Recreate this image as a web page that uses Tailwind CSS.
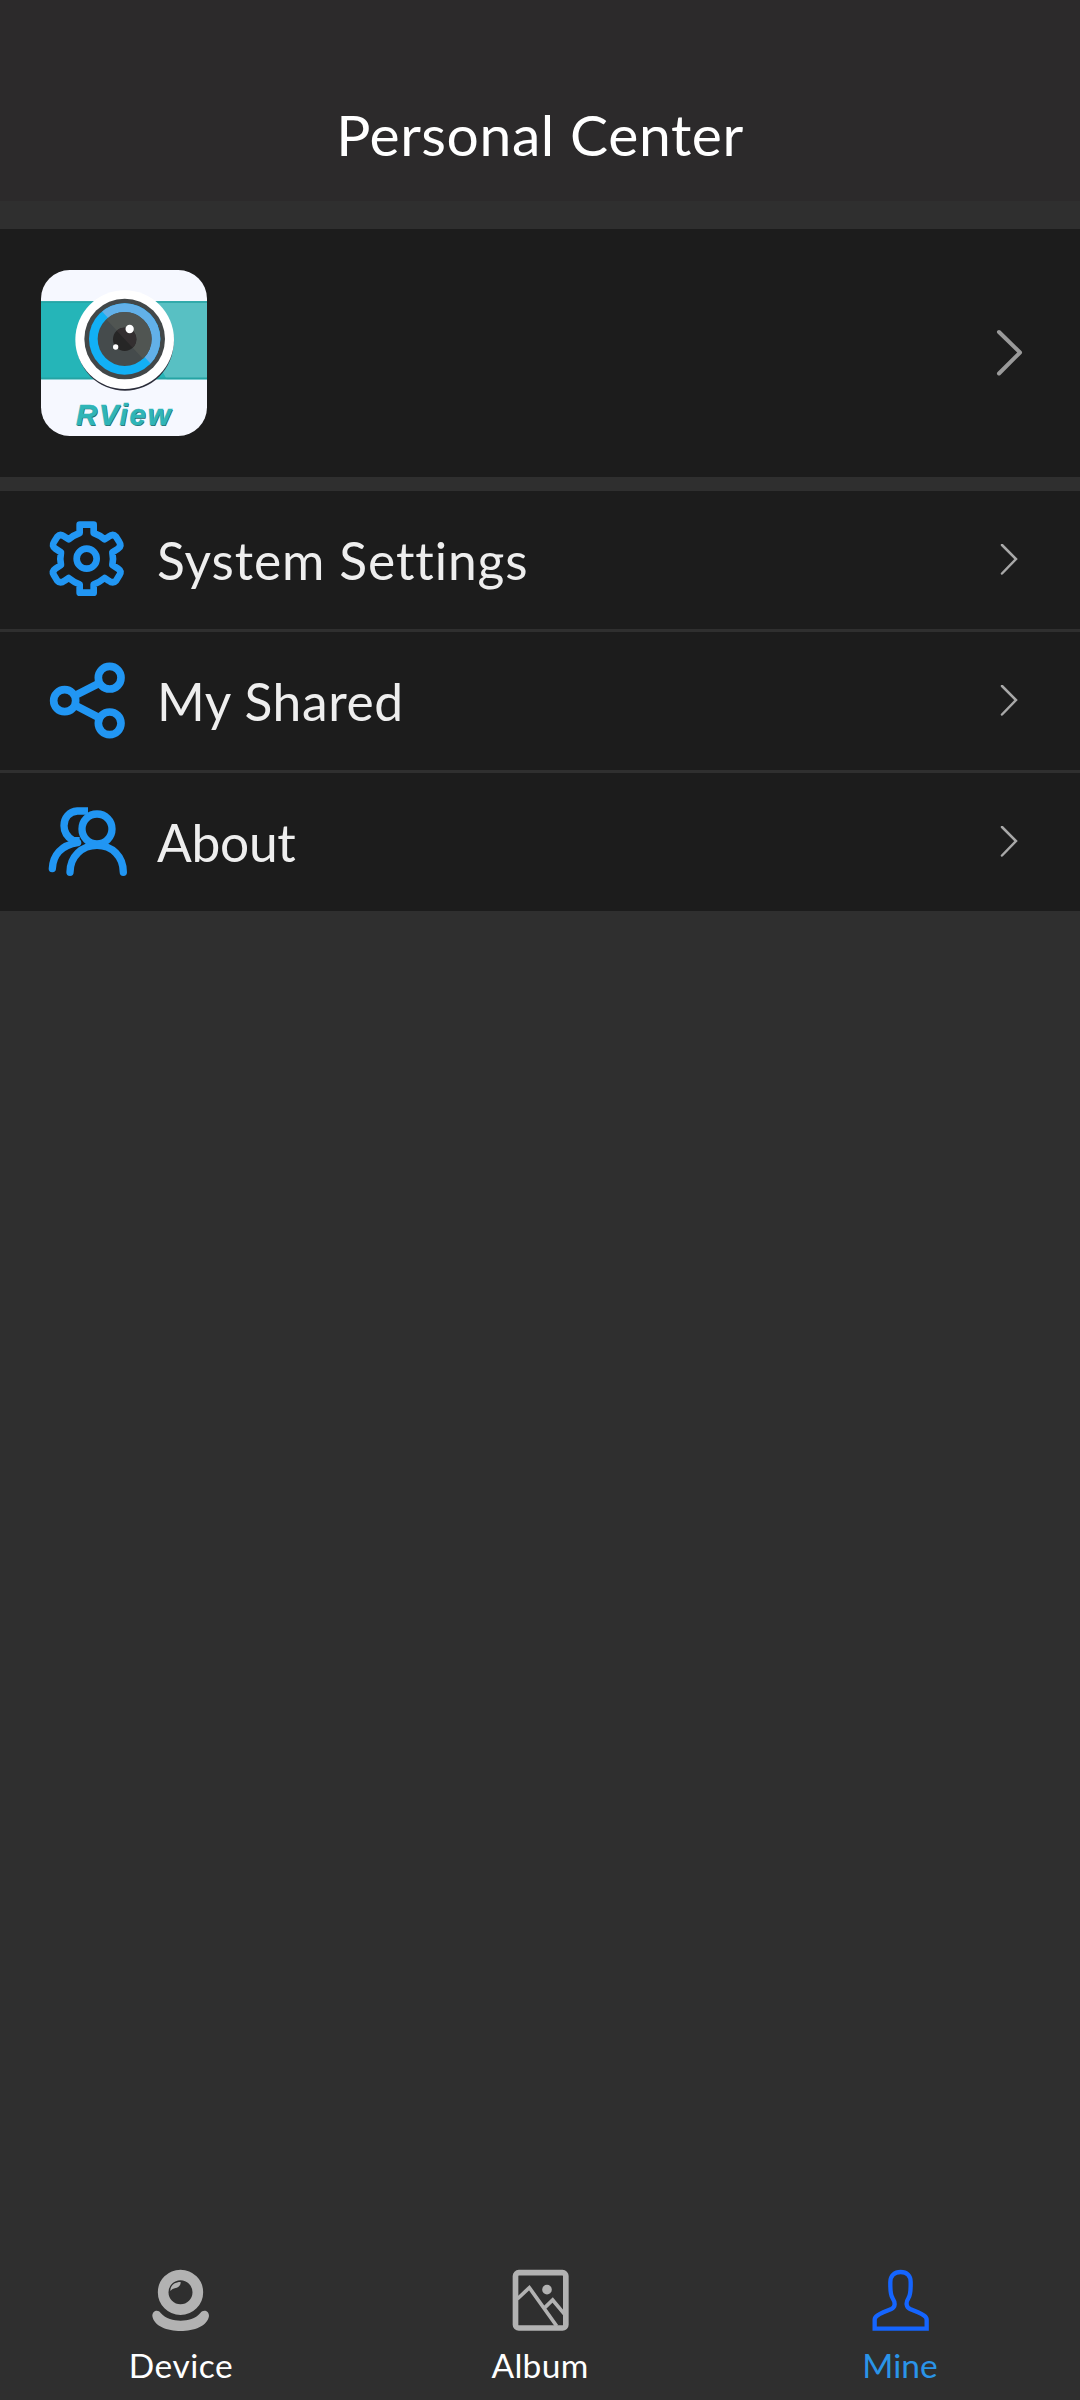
<!DOCTYPE html>
<html lang="en">
<head>
<meta charset="utf-8">
<title>Personal Center</title>
<script src="https://cdn.jsdelivr.net/npm/@tailwindcss/browser@4"></script>
</head>
<body class="bg-[#2f2f2f]">
<div class="flex h-[2400px] w-[1080px] flex-col overflow-hidden bg-[#2f2f2f] font-['Lato',sans-serif]">
  <header class="flex h-[201px] shrink-0 items-center justify-center bg-[#2c2a2b] pt-[67px]">
    <h1 class="text-[57px] leading-[68px] tracking-[0.6px] text-white">Personal Center</h1>
  </header>

  <main class="flex grow flex-col pt-7">
    <section class="flex h-[248px] items-center justify-between bg-[#1c1c1c] pl-[41px] pr-[57px]">
      <svg class="size-[166px]" viewBox="63 59 498 498">
        <defs><clipPath id="tile"><rect x="63" y="59" width="498" height="498" rx="86"/></clipPath>
        <clipPath id="iris"><circle cx="314" cy="266" r="107"/></clipPath>
        <clipPath id="lens"><circle cx="314" cy="266" r="81"/></clipPath></defs>
        <g clip-path="url(#tile)">
          <rect x="63" y="59" width="498" height="498" fill="#f6f8ff"/>
          <rect x="63" y="153" width="498" height="234" fill="#25b5b8"/>
          <path d="M314 153H561V387H440Z" fill="#58c0c3"/>
          <path d="M63 155H561M63 384H561" stroke="#25a3a3" stroke-width="5"/>
          <circle cx="315" cy="275" r="146" fill="#2b2d3a"/>
          <circle cx="314" cy="268" r="148" fill="#fff"/>
          <circle cx="314" cy="266" r="121" fill="#424748"/>
          <g clip-path="url(#iris)">
            <rect x="200" y="150" width="230" height="230" fill="#12b0f5"/>
            <path d="M200 134L446 398V134Z" fill="#62b0e8"/>
          </g>
          <g clip-path="url(#lens)">
            <rect x="230" y="180" width="170" height="170" fill="#454b4c"/>
            <path d="M220 165L414 374V165Z" fill="#505552"/>
          </g>
          <circle cx="314" cy="267" r="35" fill="#262626"/>
          <path d="M290 241A35 35 0 0 1 338 292Z" fill="#332f30"/>
          <circle cx="329" cy="236" r="12.500" fill="#fff"/>
          <circle cx="287" cy="290" r="8" fill="#fff"/>
          <g font-family="Liberation Sans" font-weight="700" font-style="italic" font-size="88">
            <text x="170" y="527" textLength="284" fill="#28666c" aria-hidden="true">RView</text>
            <text x="168" y="525" textLength="284" fill="#2fb5b7" stroke="#2fb5b7" stroke-width="2">RView</text>
          </g>
        </g>
      </svg>
      <svg class="h-12 w-[27px]" viewBox="0 0 27 48" fill="none" stroke="#9a9a9a" stroke-width="4" stroke-linecap="round" stroke-linejoin="round"><path d="M3 3L24 23.500L3 44.500"/></svg>
    </section>

    <ul class="mt-3.5 flex flex-col gap-[3px]">
      <li class="flex h-[138px] items-center bg-[#1c1c1c] pl-[30px] pr-[61px]">
        <svg class="size-[120px]" viewBox="0 0 360 360" fill="none" stroke="#2196f3" stroke-width="20" stroke-linejoin="round">
          <path d="M149 99V74H191V99Q208 105 224 118L236 110Q249 100 258 110L268 126Q276 138 264 146L247 157Q251 176 247 195L264 206Q276 214 268 226L258 242Q249 252 236 242L224 234Q208 247 191 253V278H149V253Q132 247 116 234L104 242Q91 252 82 242L72 226Q64 214 76 206L93 195Q89 176 93 157L76 146Q64 138 72 126L82 110Q91 100 104 110L116 118Q132 105 149 99Z"/>
          <circle cx="170" cy="176" r="30"/>
        </svg>
        <span class="ml-[7px] grow text-[51.500px] leading-[60px] tracking-[0.9px] text-[#eee]">System Settings</span>
        <svg class="h-8 w-[19px]" viewBox="0 0 19 32" fill="none" stroke="#a8a8a8" stroke-width="2.500" stroke-linecap="round"><path d="M2 1L16 15L2 29.500"/></svg>
      </li>
      <li class="flex h-[138px] items-center bg-[#1c1c1c] pl-[30px] pr-[61px]">
        <svg class="size-[120px]" viewBox="0 3 360 360" fill="none" stroke="#2196f3" stroke-width="23">
          <circle cx="104" cy="182" r="33"/><circle cx="239" cy="113" r="34"/><circle cx="239" cy="250" r="34"/>
          <path d="M136 166L209 129M136 196L209 234"/>
        </svg>
        <span class="ml-[7px] grow text-[51.500px] leading-[60px] tracking-[0.6px] text-[#eee]">My Shared</span>
        <svg class="h-8 w-[19px]" viewBox="0 0 19 32" fill="none" stroke="#a8a8a8" stroke-width="2.500" stroke-linecap="round"><path d="M2 1L16 15L2 29.500"/></svg>
      </li>
      <li class="flex h-[138px] items-center bg-[#1c1c1c] pl-[30px] pr-[61px]">
        <svg class="size-[120px]" viewBox="0 6 360 360" fill="none" stroke="#2196f3" stroke-width="22">
          <circle cx="201" cy="147" r="45"/>
          <path d="M120 277C120 229 156 196 201 196S280 229 280 277" stroke-linecap="round"/>
          <path d="M174 93H142C117 95 102 114 102 137C102 158 113 172 130 182L149 182"/>
          <path d="M67 266C69 224 94 196 143 188" stroke-linecap="round"/>
        </svg>
        <span class="ml-[7px] grow text-[51.500px] leading-[60px] tracking-[-0.3px] text-[#eee]">About</span>
        <svg class="h-8 w-[19px]" viewBox="0 0 19 32" fill="none" stroke="#a8a8a8" stroke-width="2.500" stroke-linecap="round"><path d="M2 1L16 15L2 29.500"/></svg>
      </li>
    </ul>
  </main>

  <nav class="grid grid-cols-3 pb-[15px] text-[33.500px] leading-10 text-white">
    <div class="flex flex-col items-center gap-3.5">
      <svg class="h-[61px] w-[57px] overflow-visible" viewBox="96 90 171 183">
        <circle cx="181.500" cy="157" r="52" fill="none" stroke="#b2b2b2" stroke-width="32"/>
        <path d="M151 153C151 136 163 126 182 126C182 137 176 142 167 144C160 146 155 148 151 153Z" fill="#b2b2b2"/>
        <path d="M97 228C97 211 115 207 122 219C138 237 160 242 182 242S226 237 241 219C249 207 267 211 267 228C263 258 222 273 182 273S101 258 97 228Z" fill="#b2b2b2"/>
      </svg>
      <span class="pl-0.5 tracking-[0.5px]">Device</span>
    </div>
    <div class="flex flex-col items-center gap-3.5">
      <svg class="h-[61px] w-[57px] overflow-visible" viewBox="96 90 171 183" fill="none" stroke="#b2b2b2">
        <rect x="106.500" y="98" width="151" height="166" rx="10" stroke-width="17"/>
        <path d="M112 177L148 143L230 258M192 205L218 180L254 223" stroke-width="11"/>
        <circle cx="201" cy="149" r="14.500" fill="#b2b2b2" stroke="none"/>
      </svg>
      <span class="tracking-[0.3px]">Album</span>
    </div>
    <div class="flex flex-col items-center gap-3.5 text-[#2a94e8]">
      <svg class="h-[61px] w-[57px] overflow-visible" viewBox="126 90 171 183" fill="none" stroke="#1565ff" stroke-width="13">
        <path d="M134 266V239C134 229 147 223 160 217L184 207C197 201 196 187 188 175C180 164 181 148 181 126C181 106 194 96 212 96S242 106 242 126C242 148 243 164 235 175C227 187 228 201 240 207L264 217C277 223 290 229 290 239V266Z"/>
      </svg>
      <span>Mine</span>
    </div>
  </nav>
</div>
</body>
</html>
